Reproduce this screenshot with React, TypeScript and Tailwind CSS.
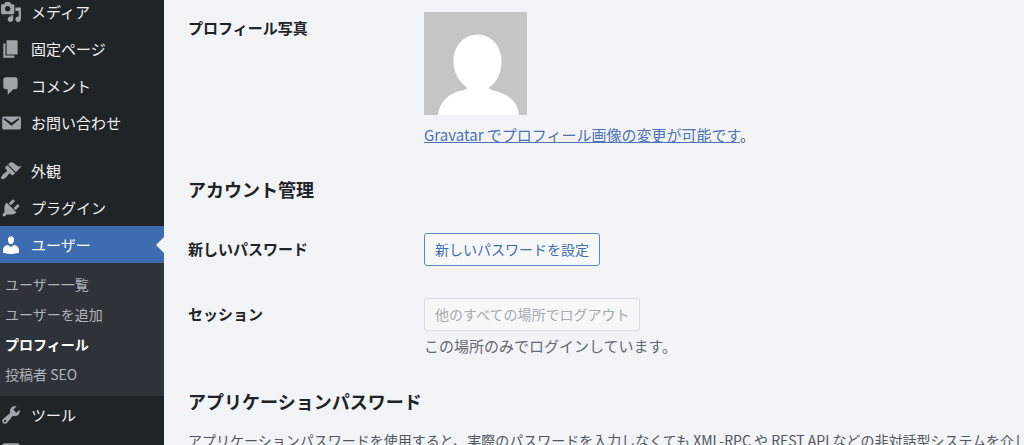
import type { ReactNode } from 'react';

type MenuItem = {
  label: string;
  icon: string;
  current?: boolean;
  separated?: boolean;
  children?: { label: string; current?: boolean }[];
};

const menu: MenuItem[] = [
  {
    label: 'メディア',
    icon: 'M13 11V4c0-.55-.45-1-1-1h-1.67L9 1H5L3.67 3H2c-.55 0-1 .45-1 1v7c0 .55.45 1 1 1h10c.55 0 1-.45 1-1zM7 4.5c1.38 0 2.5 1.12 2.5 2.5S8.38 9.5 7 9.5 4.5 8.38 4.5 7 5.62 4.5 7 4.5zM14 6h5v10.5c0 1.38-1.12 2.5-2.5 2.5S14 17.88 14 16.5s1.12-2.5 2.5-2.5c.17 0 .34.02.5.05V9h-3V6zm-4 8.05V13h2v3.5c0 1.38-1.12 2.5-2.5 2.5S7 17.88 7 16.5 8.12 14 9.5 14c.17 0 .34.02.5.05z',
  },
  { label: '固定ページ', icon: 'M6 15V2h10v13H6zm-1 1h8v2H3V5h2v11z' },
  {
    label: 'コメント',
    icon: 'M5 2h9c1.1 0 2 .9 2 2v7c0 1.1-.9 2-2 2h-2l-5 5v-5H5c-1.1 0-2-.9-2-2V4c0-1.1.9-2 2-2z',
  },
  {
    label: 'お問い合わせ',
    icon: 'M3.87 4h13.25C18.37 4 19 4.59 19 5.79v8.42c0 1.19-.63 1.79-1.88 1.79H3.87c-1.25 0-1.88-.6-1.88-1.79V5.79c0-1.2.63-1.79 1.88-1.79zm6.62 8.6l6.74-5.53c.24-.2.43-.66.13-1.07-.29-.41-.82-.42-1.17-.17l-5.7 3.86L4.8 5.83c-.35-.25-.88-.24-1.17.17-.3.41-.11.87.13 1.07z',
  },
  {
    label: '外観',
    separated: true,
    icon: 'M14.48 11.06L7.41 3.99l1.5-1.5c.5-.56 2.3-.47 3.51.32 1.21.8 1.43 1.28 2.91 2.1 1.18.64 2.45 1.26 4.45.85zm-.71.71L6.7 4.7 4.93 6.47c-.39.39-.39 1.02 0 1.41l1.06 1.06c.39.39.39 1.03 0 1.42-.6.6-1.43 1.11-2.21 1.69-.35.26-.7.53-1.01.84C1.43 14.23.4 16.08 1.4 17.07c.99 1 2.84-.03 4.18-1.36.31-.31.58-.66.85-1.02.57-.78 1.08-1.61 1.69-2.21.39-.39 1.02-.39 1.41 0l1.06 1.06c.39.39 1.02.39 1.41 0z',
  },
  {
    label: 'プラグイン',
    icon: 'M13.11 4.36L9.87 7.6 8 5.73l3.24-3.24c.35-.34 1.05-.2 1.56.32.52.51.66 1.21.31 1.55zm-8 1.77l.91-1.12 9.01 9.01-1.19.84c-.71.71-2.63 1.16-3.82 1.16H6.14L4.9 17.26c-.59.59-1.54.59-2.12 0-.59-.58-.59-1.53 0-2.12l1.24-1.24v-3.88c0-1.13.4-3.19 1.09-3.89zm7.26 3.97l3.24-3.24c.34-.35 1.04-.21 1.55.31.52.51.66 1.21.31 1.55l-3.24 3.25z',
  },
  {
    label: 'ユーザー',
    current: true,
    icon: 'M10 9.25c-2.27 0-2.73-3.44-2.73-3.44C7 4.02 7.82 2 9.97 2c2.16 0 2.98 2.02 2.71 3.81 0 0-.41 3.44-2.68 3.44zm0 2.57L12.72 10c2.39 0 4.52 2.33 4.52 4.53v2.49s-3.65 1.13-7.24 1.13c-3.65 0-7.24-1.13-7.24-1.13v-2.49c0-2.25 1.94-4.48 4.47-4.48z',
    children: [
      { label: 'ユーザー一覧' },
      { label: 'ユーザーを追加' },
      { label: 'プロフィール', current: true },
      { label: '投稿者 SEO' },
    ],
  },
  {
    label: 'ツール',
    icon: 'M16.68 9.77c-1.34 1.34-3.3 1.67-4.95.99l-5.41 6.52c-.99.99-2.59.99-3.58 0s-.99-2.59 0-3.57l6.52-5.42c-.68-1.65-.35-3.61.99-4.95 1.28-1.28 3.12-1.62 4.72-1.06l-2.89 2.89 2.82 2.82 2.86-2.87c.53 1.58.18 3.39-1.08 4.65zM3.81 16.21c.4.39 1.04.39 1.43 0 .4-.4.4-1.04 0-1.43-.39-.4-1.03-.4-1.43 0-.39.39-.39 1.03 0 1.43z',
  },
  {
    label: '設定',
    icon: 'M18 16V4c0-1.1-.9-2-2-2H4c-1.1 0-2 .9-2 2v12c0 1.1.9 2 2 2h12c1.1 0 2-.9 2-2zM8 11h1v2H8v3H6v-3H5v-2h1V4h2v7zm6-4h1v2h-1v7h-2V9h-1V7h1V4h2v3z',
  },
];

function Sidebar() {
  return (
    <nav className="w-[164px] shrink-0 overflow-hidden bg-[#1f2427]">
      <ul className="-mt-[7px]">
        {menu.map((item) => (
          <li key={item.label} className={item.separated ? 'mt-[11px]' : ''}>
            <a
              href="#"
              className={`relative flex items-center gap-[9px] pt-2 pb-[7px] text-[15px] leading-5 ${
                item.current ? 'bg-[#3d6cb1] text-white' : 'text-[#f0f0f1]'
              }`}
            >
              <svg
                viewBox="0 0 20 20"
                fill="currentColor"
                aria-hidden="true"
                className={`size-[22px] shrink-0 ${item.current ? 'text-white' : 'text-[#a0a5aa]'}`}
              >
                <path d={item.icon} />
              </svg>
              <span>{item.label}</span>
              {item.current && (
                <span className="absolute top-1/2 right-0 -translate-y-1/2 border-8 border-l-0 border-transparent border-r-[#f2f3f5]" />
              )}
            </a>

            {item.children && (
              <ul className="bg-[#2e333a] pt-1.5 pb-[7px]">
                {item.children.map((child) => (
                  <li key={child.label}>
                    <a
                      href="#"
                      className={`flex h-[30px] items-center pl-[5px] text-sm ${
                        child.current ? 'font-bold text-white' : 'text-[#b1b4b9]'
                      }`}
                    >
                      {child.label}
                    </a>
                  </li>
                ))}
              </ul>
            )}
          </li>
        ))}
      </ul>
    </nav>
  );
}

function Field({ label, children }: { label: string; children: ReactNode }) {
  return (
    <div className="flex items-start">
      <h3 className="w-[236px] shrink-0 pt-1.5 text-[15px] leading-5 font-semibold text-[#1d2327]">{label}</h3>
      <div className="min-w-0 flex-1">{children}</div>
    </div>
  );
}

function Avatar() {
  return (
    <svg viewBox="0 0 103 103" role="img" aria-label="プロフィール写真" className="size-[103px]">
      <rect width="103" height="103" fill="#c5c5c5" />
      <path
        d="M53.5 22.5C67 22.5 77.5 34 77.5 49C77.5 61 73 70 64.5 76C67 78 70 78.500 75 80C87 84 94.500 92 94.500 103H14C15 92 22 84 32 80C37 78.500 41 78.500 43.500 76C35 70 29.500 61 29.500 49C29.500 34 40 22.500 53.500 22.500Z"
        fill="#fff"
      />
    </svg>
  );
}

export default function App() {
  return (
    <div
      lang="ja"
      className="flex h-screen overflow-hidden bg-[#f2f3f5] font-['Noto_Sans_CJK_JP',sans-serif] text-[#50575e]"
    >
      <Sidebar />

      <main className="min-w-0 flex-1 overflow-hidden pt-3 pl-6">
        <Field label="プロフィール写真">
          <Avatar />
          <p className="mt-2.5 text-[15px] leading-5">
            <a href="#" className="text-[#4a72b4] underline">
              Gravatar でプロフィール画像の変更が可能です
            </a>
            。
          </p>
        </Field>

        <h2 className="mt-8 text-lg leading-6 font-semibold text-[#1d2327]">アカウント管理</h2>

        <div className="mt-8 flex flex-col gap-8">
          <Field label="新しいパスワード">
            <button
              type="button"
              className="block h-[33px] rounded-[3px] border border-[#5f86c4] bg-[#f6f7f7] px-2.5 pb-0.5 text-sm text-[#3d6cb1]"
            >
              新しいパスワードを設定
            </button>
          </Field>
          <Field label="セッション">
            <button
              type="button"
              disabled
              className="block h-[33px] rounded-[3px] border border-[#dcdcde] bg-[#f6f7f7] px-2.5 pb-0.5 text-sm text-[#a7aaad]"
            >
              他のすべての場所でログアウト
            </button>
            <p className="mt-[3px] text-[15px] leading-6 text-[#646970]">この場所のみでログインしています。</p>
          </Field>
        </div>

        <h2 className="mt-[31px] text-lg leading-6 font-semibold text-[#1d2327]">アプリケーションパスワード</h2>
        <p className="mt-4 text-sm leading-[22px] whitespace-nowrap">
          アプリケーションパスワードを使用すると、実際のパスワードを入力しなくても XML-RPC や REST API などの非対話型システムを介した認証が可能になります。
        </p>
      </main>
    </div>
  );
}
